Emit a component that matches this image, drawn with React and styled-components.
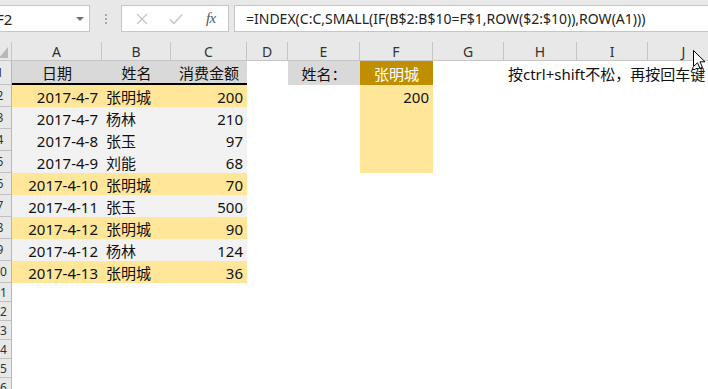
import React from 'react';
import styled, { createGlobalStyle } from 'styled-components';

const Global = createGlobalStyle`
  html, body { margin: 0; padding: 0; background: #fff; overflow: hidden; }
  body { font-family: "Noto Sans", "Noto Sans CJK SC", sans-serif; }
  * { box-sizing: border-box; }
`;

const Page = styled.div`
  position: relative;
  width: 708px;
  height: 389px;
  overflow: hidden;
  background: #fff;
`;

const Toolbar = styled.div`
  display: flex;
  align-items: flex-start;
  height: 42px;
  padding-top: 5px;
  background: #e8e8e8;
`;

const NameBox = styled.div`
  width: 91px;
  height: 27px;
  margin-left: -1px;
  background: #fff;
  border: 1px solid #c6c6c6;
  display: flex;
  align-items: center;
  justify-content: space-between;
  overflow: hidden;
  font-size: 15px;
  color: #222;
`;

const NameText = styled.span`
  margin-left: -4px;
`;

const Caret = styled.span`
  width: 0;
  height: 0;
  border-left: 4px solid transparent;
  border-right: 4px solid transparent;
  border-top: 4px solid #707070;
  margin-right: 5px;
`;

const Grip = styled.div`
  width: 2px;
  margin: 9px 14px 0 15px;
  display: flex;
  flex-direction: column;
  gap: 2px;
`;

const Dot = styled.span`
  width: 2px;
  height: 2px;
  background: #a8a8a8;
`;

const Buttons = styled.div`
  width: 108px;
  height: 27px;
  padding-left: 3px;
  background: #fff;
  border: 1px solid #c6c6c6;
  display: flex;
  align-items: center;
`;

const Slot = styled.div`
  width: 35px;
  display: flex;
  justify-content: center;
  align-items: center;
`;

const Fx = styled.span`
  font-family: "Liberation Serif", serif;
  font-style: italic;
  font-size: 15px;
  color: #555;
  letter-spacing: -0.5px;
`;

const FormulaBox = styled.div`
  flex: 1;
  height: 27px;
  margin-left: 5px;
  margin-right: -2px;
  background: #fff;
  border: 1px solid #c6c6c6;
  padding-left: 11px;
  font-size: 14px;
  line-height: 25px;
  color: #222;
  white-space: nowrap;
  overflow: hidden;
`;

const Sheet = styled.div`
  display: grid;
  grid-template-columns: 12px 90px 69px 76px 41px 72px 73px 71px 73px 71px 72px;
  grid-template-rows: 19px 24px repeat(9, 22px) repeat(6, 19px);
`;

const Corner = styled.div`
  background: #e8e8e8;
  border-right: 1px solid #c6c6c6;
  border-bottom: 1px solid #c6c6c6;
  position: relative;
`;

const CornerTri = styled.span`
  position: absolute;
  right: 3px;
  bottom: 2px;
  width: 0;
  height: 0;
  border-left: 9px solid transparent;
  border-bottom: 11px solid #b8b8b8;
`;

const ColHead = styled.div`
  background: #e8e8e8;
  border-right: 1px solid #c6c6c6;
  border-bottom: 1px solid #c6c6c6;
  display: flex;
  align-items: center;
  justify-content: center;
  font-size: 14px;
  color: #333;
  padding-top: 1px;
`;

const RowHead = styled.div`
  background: #e8e8e8;
  border-right: 1px solid #b8b8b8;
  border-bottom: 1px solid #c0c0c0;
  overflow: hidden;
  display: flex;
  align-items: center;
  font-size: 12px;
  color: #333;
`;

const RowNum = styled.span`
  flex: none;
  width: 24px;
  margin-left: -12px;
  text-align: center;
`;

const Cell = styled.div`
  background: ${p => p.$bg || 'transparent'};
  color: ${p => p.$color || '#111'};
  border-bottom: ${p => (p.$thick ? '2px solid #000' : 'none')};
  display: flex;
  align-items: center;
  justify-content: ${p => (p.$align === 'right' ? 'flex-end' : p.$align === 'center' ? 'center' : 'flex-start')};
  padding: 1px 4px 0 4px;
  font-size: 15px;
  white-space: nowrap;
  overflow: visible;
  position: relative;
  z-index: ${p => (p.$over ? 1 : 0)};
`;

const Cursor = styled.svg`
  position: absolute;
  left: 693px;
  top: 50px;
`;

const YELLOW = '#ffe699';
const GRAY = '#d9d9d9';
const LIGHT = '#f2f2f2';
const GOLD = '#bf8f00';

const cols = ['A', 'B', 'C', 'D', 'E', 'F', 'G', 'H', 'I', 'J'];

const data = [
  ['2017-4-7', '张明城', '200', true],
  ['2017-4-7', '杨林', '210', false],
  ['2017-4-8', '张玉', '97', false],
  ['2017-4-9', '刘能', '68', false],
  ['2017-4-10', '张明城', '70', true],
  ['2017-4-11', '张玉', '500', false],
  ['2017-4-12', '张明城', '90', true],
  ['2017-4-12', '杨林', '124', false],
  ['2017-4-13', '张明城', '36', true],
];

const Empty = ({ n }) => Array.from({ length: n }).map((_, i) => <Cell key={'e' + i} />);

export default function App() {
  return (
    <Page>
      <Global />
      <Toolbar>
        <NameBox>
          <NameText>F2</NameText>
          <Caret />
        </NameBox>
        <Grip>
          <Dot />
          <Dot />
          <Dot />
        </Grip>
        <Buttons>
          <Slot>
            <svg width="12" height="12" viewBox="0 0 12 12">
              <path d="M1 1L11 11M11 1L1 11" stroke="#c4c4c4" strokeWidth="1.3" fill="none" />
            </svg>
          </Slot>
          <Slot>
            <svg width="14" height="12" viewBox="0 0 14 12">
              <path d="M1 6.5L5 10.5L13 1.5" stroke="#c4c4c4" strokeWidth="1.4" fill="none" />
            </svg>
          </Slot>
          <Slot>
            <Fx>fx</Fx>
          </Slot>
        </Buttons>
        <FormulaBox>=INDEX(C:C,SMALL(IF(B$2:B$10=F$1,ROW($2:$10)),ROW(A1)))</FormulaBox>
      </Toolbar>
      <Sheet>
        <Corner>
          <CornerTri />
        </Corner>
        {cols.map(c => (
          <ColHead key={c}>{c}</ColHead>
        ))}

        <RowHead><RowNum>1</RowNum></RowHead>
        <Cell $bg={GRAY} $align="center" $thick>日期</Cell>
        <Cell $bg={GRAY} $align="center" $thick>姓名</Cell>
        <Cell $bg={GRAY} $align="center" $thick>消费金额</Cell>
        <Cell />
        <Cell $bg={GRAY} $align="center">姓名：</Cell>
        <Cell $bg={GOLD} $align="center" $color="#fff">张明城</Cell>
        <Cell />
        <Cell $over>按ctrl+shift不松，再按回车键</Cell>
        <Cell />
        <Cell />

        {data.map((r, i) => (
          <React.Fragment key={i}>
            <RowHead><RowNum>{i + 2}</RowNum></RowHead>
            <Cell $bg={r[3] ? YELLOW : LIGHT} $align="right">{r[0]}</Cell>
            <Cell $bg={r[3] ? YELLOW : LIGHT}>{r[1]}</Cell>
            <Cell $bg={r[3] ? YELLOW : LIGHT} $align="right">{r[2]}</Cell>
            <Cell />
            <Cell />
            {i < 4 ? (
              <Cell $bg={YELLOW} $align="right">{i === 0 ? '200' : ''}</Cell>
            ) : (
              <Cell />
            )}
            <Empty n={4} />
          </React.Fragment>
        ))}

        {[11, 12, 13, 14, 15, 16].map(n => (
          <React.Fragment key={n}>
            <RowHead><RowNum>{n}</RowNum></RowHead>
            <Empty n={10} />
          </React.Fragment>
        ))}
      </Sheet>
      <Cursor width="13" height="20" viewBox="0 0 13 20">
        <path d="M0.5 0.5L0.5 16.5L4.5 12.8L7 18.5L9.5 17.5L7 11.8L12 11.8Z" fill="#fff" stroke="#000" strokeWidth="1" strokeLinejoin="round" />
      </Cursor>
    </Page>
  );
}
